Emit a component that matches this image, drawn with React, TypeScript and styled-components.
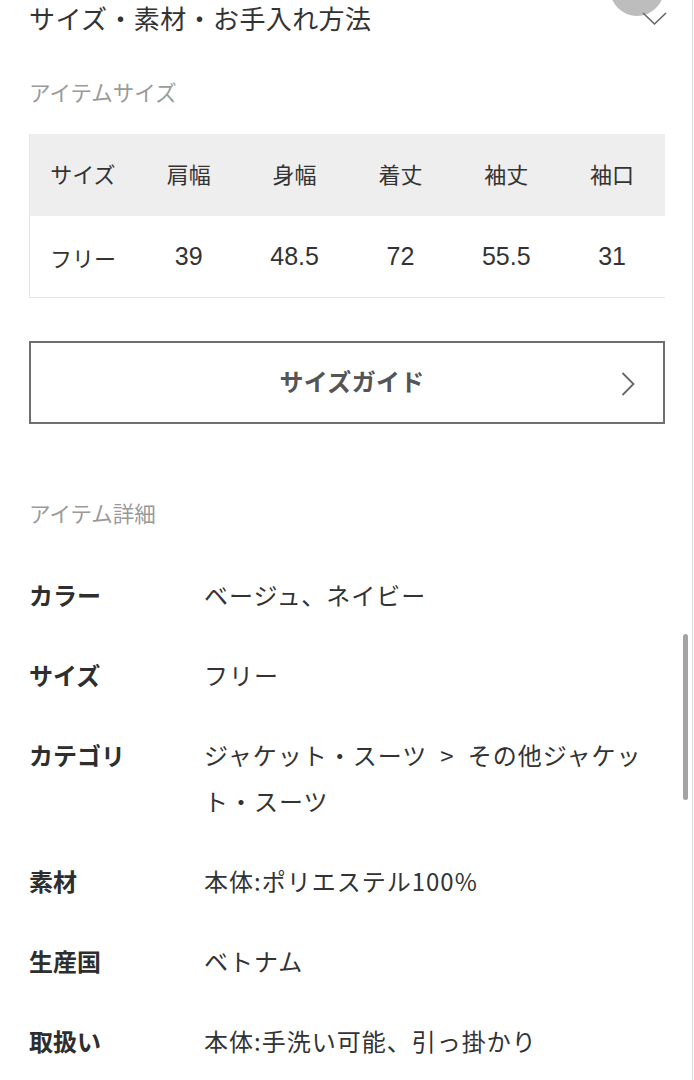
import React from 'react';
import styled, { createGlobalStyle } from 'styled-components';

const GlobalStyle = createGlobalStyle`
  body {
    margin: 0;
    background: #fff;
    font-family: "Liberation Sans", "Noto Sans CJK JP", sans-serif;
    color: #333;
  }
`;

const Page = styled.div`
  position: relative;
  width: 693px;
  height: 1080px;
  overflow: hidden;
  border-right: 1px solid #dcdcdc;
  padding: 0 27px 0 29px;
  box-sizing: border-box;
`;

const Header = styled.div`
  display: flex;
  align-items: flex-start;
  justify-content: space-between;
  height: 38px;
`;

const Title = styled.h2`
  margin: 0;
  font-size: 26px;
  font-weight: 400;
  line-height: 36px;
  letter-spacing: 0.4px;
  color: #333;
  font-family: "Noto Sans CJK JP", sans-serif;
`;

const FloatCircle = styled.div`
  position: absolute;
  left: 610px;
  top: -38px;
  width: 54px;
  height: 54px;
  border-radius: 50%;
  background: #bdbdbd;
`;

const ChevronDown = styled.svg`
  position: absolute;
  left: 642px;
  top: 11px;
`;

const SectionLabel = styled.div<{ $top: number }>`
  margin-top: ${({ $top }) => $top}px;
  font-size: 21.5px;
  line-height: 30px;
  color: #9a9a9a;
  font-family: "Noto Sans CJK JP", sans-serif;
`;

const Table = styled.div`
  margin-top: 27px;
  border-left: 1px solid #e6e6e6;
  border-bottom: 1px solid #e6e6e6;
`;

const TableRow = styled.div<{ $head?: boolean }>`
  display: grid;
  grid-template-columns: repeat(6, 1fr);
  height: ${({ $head }) => ($head ? 82 : 81)}px;
  box-sizing: border-box;
  padding-bottom: ${({ $head }) => ($head ? 5 : 0)}px;
  align-items: center;
  background: ${({ $head }) => ($head ? '#eeeeee' : '#fff')};
`;

const Cell = styled.div<{ $num?: boolean }>`
  text-align: center;
  font-size: ${({ $num }) => ($num ? 25 : 22)}px;
  color: #333;
`;

const GuideButton = styled.button`
  display: flex;
  align-items: center;
  justify-content: center;
  position: relative;
  width: 100%;
  height: 83px;
  margin-top: 43px;
  border: 2px solid #6f6f6f;
  background: #fff;
  font-family: "Noto Sans CJK JP", sans-serif;
  font-size: 24px;
  font-weight: 700;
  letter-spacing: 0.3px;
  color: #555;
  cursor: pointer;
  padding: 0 0 5px 10px;

  svg {
    position: absolute;
    right: 28px;
    top: 29px;
  }
`;

const DetailList = styled.dl`
  margin: 27px 0 0;
`;

const DetailRow = styled.div`
  display: grid;
  grid-template-columns: 175px 444px;
  padding: 17px 0;
  line-height: 46px;
  font-size: 24px;
`;

const DetailLabel = styled.dt`
  font-weight: 700;
  color: #2e2e2e;
  font-family: "Noto Sans CJK JP", sans-serif;
`;

const DetailValue = styled.dd`
  margin: 0;
  color: #333;
  letter-spacing: 1px;
  font-family: "Noto Sans CJK JP", sans-serif;
`;

const ScrollThumb = styled.div`
  position: absolute;
  left: 683px;
  top: 634px;
  width: 5px;
  height: 166px;
  border-radius: 3px;
  background: #a3a3a3;
`;

const sizeHead = ['サイズ', '肩幅', '身幅', '着丈', '袖丈', '袖口'];
const sizeRow = ['フリー', '39', '48.5', '72', '55.5', '31'];

const details = [
  { label: 'カラー', value: 'ベージュ、ネイビー' },
  { label: 'サイズ', value: 'フリー' },
  { label: 'カテゴリ', value: 'ジャケット・スーツ\u2002>\u2002その他ジャケット・スーツ' },
  { label: '素材', value: '本体:ポリエステル100%' },
  { label: '生産国', value: 'ベトナム' },
  { label: '取扱い', value: '本体:手洗い可能、引っ掛かり' },
];

const App: React.FC = () => (
  <>
    <GlobalStyle />
    <Page>
      <Header>
        <Title>サイズ・素材・お手入れ方法</Title>
      </Header>
      <FloatCircle />
      <ChevronDown width="26" height="16" viewBox="0 0 26 16" fill="none">
        <path d="M1 2l11.5 11L24 2" stroke="#666" strokeWidth={1.6} />
      </ChevronDown>

      <SectionLabel $top={39}>アイテムサイズ</SectionLabel>
      <Table>
        <TableRow $head>
          {sizeHead.map(h => (
            <Cell key={h}>{h}</Cell>
          ))}
        </TableRow>
        <TableRow>
          {sizeRow.map((v, i) => (
            <Cell key={i} $num={i > 0}>
              {v}
            </Cell>
          ))}
        </TableRow>
      </Table>

      <GuideButton>
        サイズガイド
        <svg width="14" height="24" viewBox="0 0 14 24" fill="none">
          <path d="M1.5 1l11 11-11 11" stroke="#666" strokeWidth={1.8} />
        </svg>
      </GuideButton>

      <SectionLabel $top={74}>アイテム詳細</SectionLabel>
      <DetailList>
        {details.map(d => (
          <DetailRow key={d.label}>
            <DetailLabel>{d.label}</DetailLabel>
            <DetailValue>{d.value}</DetailValue>
          </DetailRow>
        ))}
      </DetailList>

      <ScrollThumb />
    </Page>
  </>
);

export default App;
